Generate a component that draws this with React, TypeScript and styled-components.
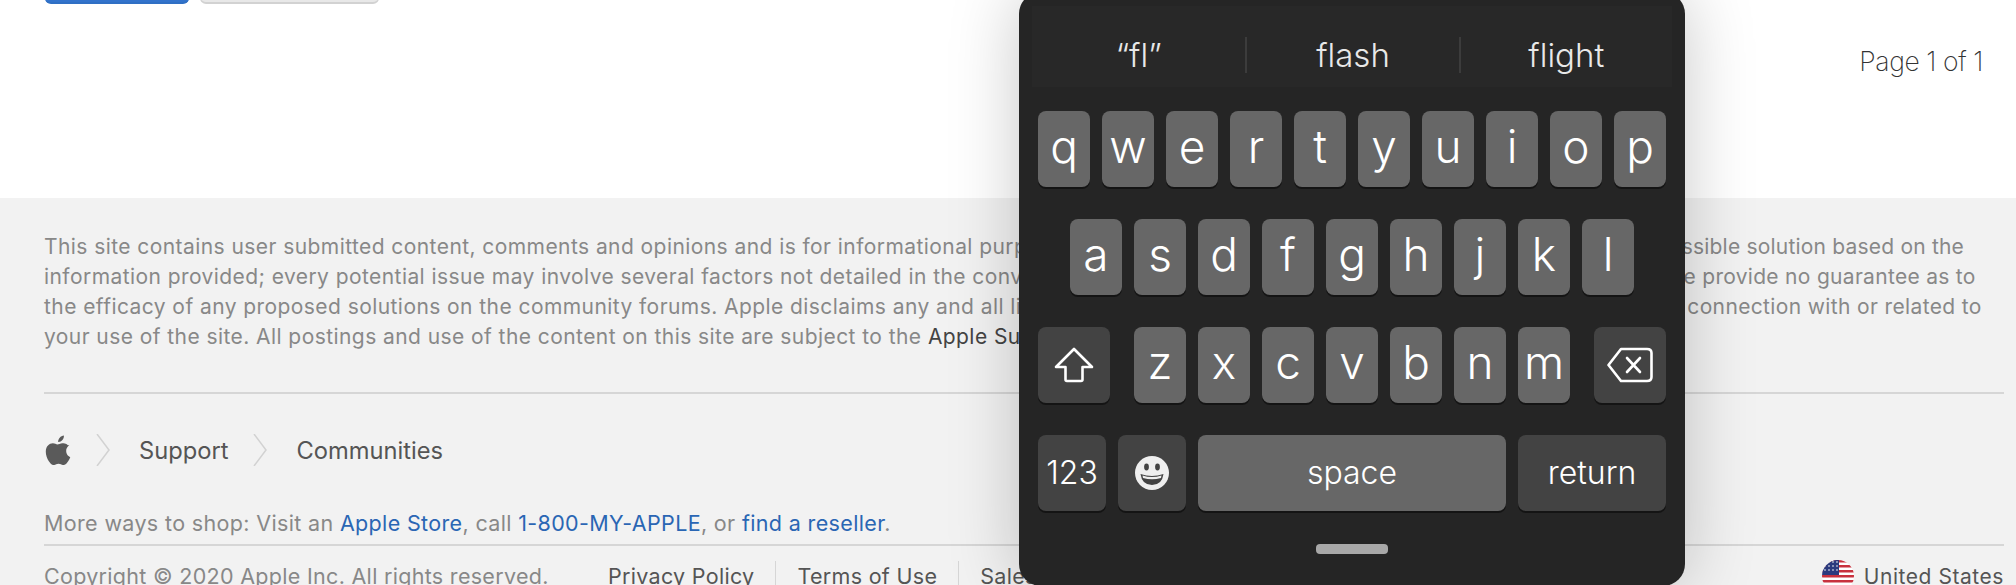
import React from 'react';
import styled, { createGlobalStyle } from 'styled-components';

/* ─── Global ──────────────────────────────────────────────────────── */
const GlobalStyle = createGlobalStyle`
  html, body { margin: 0; padding: 0; background: #fff; }
  body { font-family: Inter, "Liberation Sans", sans-serif; overflow: hidden; }
`;

const Page = styled.div`
  position: relative;
  width: 2016px;
  height: 585px;
  overflow: hidden;
  background: #fff;
`;

/* ─── Page content ────────────────────────────────────────────────── */
const Main = styled.main`
  height: 198px;
  box-sizing: border-box;
  padding: 0 33px 0 45px;
  display: flex;
  flex-direction: column;
`;

const Actions = styled.div`
  height: 4px;
  display: flex;
  align-items: flex-end;
  gap: 11px;
`;

const ActionButton = styled.button<{ $primary?: boolean; $w: number }>`
  width: ${({ $w }) => $w}px;
  height: 30px;
  flex: none;
  padding: 0;
  border-radius: 6px;
  border: ${({ $primary }) => ($primary ? 'none' : '1px solid #d2d2d2')};
  border-bottom: 2px solid ${({ $primary }) => ($primary ? '#2f6fc4' : '#d2d2d2')};
  background: ${({ $primary }) => ($primary ? '#3273cc' : '#e8e8e8')};
`;

const Pager = styled.div`
  margin-top: 41px;
  text-align: right;
  font-size: 26.5px;
  font-weight: 200;
  line-height: 32px;
  letter-spacing: -0.4px;
  color: #333;
`;

const Footer = styled.footer`
  height: 387px;
  box-sizing: border-box;
  padding: 34px 12px 0 44px;
  background: #f2f2f2;
  color: #888;
  font-size: 21px;
  overflow: hidden;
`;

const DisclaimerLine = styled.div`
  line-height: 30px;
  white-space: nowrap;
  letter-spacing: 0.43px;
`;

/* a stretch of a line tracked on its own, so the line ends where it should */
const Run = styled.span<{ $track: number }>`
  letter-spacing: ${({ $track }) => $track}px;
`;

const DarkLink = styled.span`
  color: #444;
`;

const Rule = styled.hr`
  margin: 0;
  border: none;
  height: 2px;
  background: #d6d6d6;
`;

const DisclaimerRule = styled(Rule)`
  margin-top: 40px;
`;

const Breadcrumb = styled.nav`
  height: 32px;
  margin-top: 40px;
  display: flex;
  align-items: center;
  color: #555;
  font-size: 23.7px;
`;

const Crumb = styled.span`
  margin-right: 25px;
`;

const AppleMark = styled.svg`
  width: 26px;
  height: 30px;
  margin: 0 25px 0 1px;
  fill: #5a5a5a;
`;

const Chevron = styled.svg`
  width: 14px;
  height: 32px;
  margin-right: 29px;
  fill: none;
  stroke: #d2d2d2;
  stroke-width: 1.5;
`;

const ShopLine = styled.div`
  margin-top: 42px;
  height: 30px;
  line-height: 30px;
  font-size: 21.5px;
  letter-spacing: 0.35px;
`;

const BlueLink = styled.span`
  color: #2a66b4;
`;

const ShopRule = styled(Rule)`
  margin-top: 6px;
`;

const LegalRow = styled.div`
  margin-top: 15px;
  height: 30px;
  display: flex;
  align-items: center;
  font-size: 21.5px;
  letter-spacing: 0.3px;
`;

const Copyright = styled.span`
  width: 564px;
  flex: none;
`;

const LegalLink = styled.span`
  color: #555;
  padding-right: 21px;
  margin-right: 21px;
  border-right: 1px solid #d6d6d6;
  line-height: 30px;
`;

const Locale = styled.div`
  margin-left: auto;
  display: flex;
  align-items: center;
  gap: 10px;
  color: #555;
  font-size: 21px;
  letter-spacing: 0.55px;
`;

const Flag = styled.svg`
  width: 32px;
  height: 32px;
`;

/* ─── Keyboard ────────────────────────────────────────────────────── */
const Keyboard = styled.div`
  position: absolute;
  left: 1019px;
  top: -8px;
  width: 666px;
  height: 594px;
  box-sizing: border-box;
  padding: 14px 19px 0;
  border-radius: 22px;
  background: #252525;
  box-shadow: 0 0 70px rgba(0, 0, 0, 0.22);
  display: flex;
  flex-direction: column;
  color: #fff;
`;

const Suggestions = styled.div`
  height: 81px;
  margin: 0 -6px 24px;
  flex: none;
  display: grid;
  grid-template-columns: repeat(3, 1fr);
  align-items: center;
  background: #282828;
`;

const Suggestion = styled.div<{ $divided?: boolean }>`
  height: 36px;
  margin-top: 17px;
  line-height: 36px;
  text-align: center;
  font-size: 33px;
  font-weight: 300;
  color: #e8e8e8;
  border-left: ${({ $divided }) => ($divided ? '2px solid #3c3c3c' : 'none')};
`;

const Rows = styled.div`
  display: flex;
  flex-direction: column;
  gap: 32px;
`;

const Row = styled.div<{ $spread?: boolean }>`
  display: flex;
  gap: 12px;
  justify-content: ${({ $spread }) => ($spread ? 'space-between' : 'center')};
`;

const Key = styled.div<{ $w?: number; $special?: boolean; $grow?: boolean; $label?: boolean; $icon?: boolean }>`
  width: ${({ $w }) => ($w ? `${$w}px` : '52px')};
  height: 76px;
  flex: ${({ $grow }) => ($grow ? '1' : 'none')};
  box-sizing: border-box;
  padding-bottom: ${({ $label, $icon }) => ($icon ? '0' : $label ? '2px' : '6px')};
  display: flex;
  align-items: center;
  justify-content: center;
  border-radius: 8px;
  background: ${({ $special }) => ($special ? '#434343' : '#676767')};
  box-shadow: 0 2px 0 #141414;
  font-size: ${({ $label }) => ($label ? '32px' : '46px')};
  font-weight: 300;
  color: #fff;
`;

const Handle = styled.div`
  width: 72px;
  height: 10px;
  margin: 33px auto 0;
  border-radius: 4px;
  background: #a8a8a8;
`;

const TOP_ROW = ['q', 'w', 'e', 'r', 't', 'y', 'u', 'i', 'o', 'p'];
const MID_ROW = ['a', 's', 'd', 'f', 'g', 'h', 'j', 'k', 'l'];
const LOW_ROW = ['z', 'x', 'c', 'v', 'b', 'n', 'm'];

const Letters = ({ keys }: { keys: string[] }) => (
    <>
        {keys.map((k) => <Key key={k}>{k}</Key>)}
    </>
);

const LetterGroup = styled.div`
  display: flex;
  gap: 12px;
`;

const ShiftIcon = () => (
    <svg width="40" height="36" viewBox="0 0 40 36" fill="none" stroke="#fff" strokeWidth="2.6" strokeLinejoin="round">
        <path d="M20 2 L38 20 H28.5 V32.5 Q28.5 34 27 34 H13 Q11.5 34 11.5 32.5 V20 H2 Z" />
    </svg>
);

const DeleteIcon = () => (
    <svg width="46" height="36" viewBox="0 0 46 36" fill="none" stroke="#fff" strokeWidth="2.6" strokeLinejoin="round" strokeLinecap="round">
        <path d="M14 2 H40 Q44.5 2 44.5 6 V30 Q44.5 34 40 34 H14 L1.5 18 Z" />
        <path d="M20 11 L33 25 M33 11 L20 25" />
    </svg>
);

const EmojiIcon = () => (
    <svg width="34" height="34" viewBox="0 0 34 34">
        <ellipse cx="17" cy="17" rx="17" ry="17" fill="#efefef" />
        <ellipse cx="11.5" cy="11" rx="2.4" ry="3.4" fill="#434343" />
        <ellipse cx="22.5" cy="11" rx="2.4" ry="3.4" fill="#434343" />
        <path d="M5.5 18 Q17 22 28.5 18 Q27 29 17 29 Q7 29 5.5 18 Z" fill="#434343" />
        <path d="M7.5 19.6 Q17 22.6 26.5 19.6 L26 22 Q17 24.6 8 22 Z" fill="#efefef" />
    </svg>
);

const USFlag = () => (
    <Flag viewBox="0 0 32 32">
        <defs>
            <clipPath id="flag-clip"><circle cx="16" cy="16" r="16" /></clipPath>
        </defs>
        <g clipPath="url(#flag-clip)">
            <rect width="32" height="32" fill="#fff" />
            {[0, 5, 10, 15, 20, 25, 30].map((y) => (
                <rect key={y} y={y} width="32" height="2.5" fill="#c8313e" />
            ))}
            <rect width="17" height="15" fill="#2b3a7e" />
            {[2, 6, 10].map((y) => [3, 7, 11, 15].map((x) => (
                <circle key={`${x}-${y}`} cx={x} cy={y} r="0.8" fill="#fff" />
            )))}
        </g>
    </Flag>
);

export default function App() {
    return (
        <Page>
            <GlobalStyle />
            <Main>
                <Actions>
                    <ActionButton $primary $w={144} />
                    <ActionButton $w={179} />
                </Actions>
                <Pager>Page 1 of 1</Pager>
            </Main>
            <Footer>
                <DisclaimerLine>
                    This site contains user submitted content, comments and opinions and is for informational purposes only. Apple may provide or recommend responses as a <Run $track={0.2}>possible solution based on the</Run>
                </DisclaimerLine>
                <DisclaimerLine>
                    information provided; every potential issue may involve several factors not detailed in the conversations <Run $track={0.3}>captured in an electronic forum and Apple can therefore provide no guarantee as to</Run>
                </DisclaimerLine>
                <DisclaimerLine>
                    the efficacy of any proposed solutions on the community forums. Apple disclaims any and all liability <Run $track={0.36}>for the acts, omissions and conduct of any third parties in connection with or related to</Run>
                </DisclaimerLine>
                <DisclaimerLine>
                    your use of the site. All postings and use of the content on this site are subject to the <DarkLink>Apple Support Communities Terms of Use</DarkLink>.
                </DisclaimerLine>
                <DisclaimerRule />
                <Breadcrumb>
                    <AppleMark viewBox="0 0 814 1000">
                        <path d="M788 341c-6 4-108 62-108 190 0 149 131 202 135 203-1 3-21 72-69 143-43 62-88 124-156 124s-86-40-165-40c-77 0-104 41-167 41s-106-57-156-128C44 791 0 671 0 557 0 374 119 277 236 277c62 0 114 41 153 41 37 0 95-43 166-43 27 0 123 2 183 64zM554 170c29-35 50-83 50-131 0-7-1-14-2-19-47 2-104 32-138 72-27 30-52 78-52 127 0 7 1 15 2 17 3 1 8 1 12 1 43 0 97-29 128-67z" />
                    </AppleMark>
                    <Chevron viewBox="0 0 14 32"><path d="M1 0 L13 16 L1 32" /></Chevron>
                    <Crumb>Support</Crumb>
                    <Chevron viewBox="0 0 14 32"><path d="M1 0 L13 16 L1 32" /></Chevron>
                    <Crumb>Communities</Crumb>
                </Breadcrumb>
                <ShopLine>
                    More ways to shop: Visit an <BlueLink>Apple Store</BlueLink>, call <BlueLink>1-800-MY-APPLE</BlueLink>, or <BlueLink>find a reseller</BlueLink>.
                </ShopLine>
                <ShopRule />
                <LegalRow>
                    <Copyright>Copyright © 2020 Apple Inc. All rights reserved.</Copyright>
                    <LegalLink>Privacy Policy</LegalLink>
                    <LegalLink>Terms of Use</LegalLink>
                    <LegalLink>Sales and Refunds</LegalLink>
                    <Locale><USFlag />United States</Locale>
                </LegalRow>
            </Footer>
            <Keyboard>
                <Suggestions>
                    <Suggestion>“fl”</Suggestion>
                    <Suggestion $divided>flash</Suggestion>
                    <Suggestion $divided>flight</Suggestion>
                </Suggestions>
                <Rows>
                    <Row><Letters keys={TOP_ROW} /></Row>
                    <Row><Letters keys={MID_ROW} /></Row>
                    <Row $spread>
                        <Key $w={72} $special $icon><ShiftIcon /></Key>
                        <LetterGroup><Letters keys={LOW_ROW} /></LetterGroup>
                        <Key $w={72} $special $icon><DeleteIcon /></Key>
                    </Row>
                    <Row>
                        <Key $w={68} $special $label>123</Key>
                        <Key $w={68} $special $icon><EmojiIcon /></Key>
                        <Key $grow $label>space</Key>
                        <Key $w={148} $special $label>return</Key>
                    </Row>
                </Rows>
                <Handle />
            </Keyboard>
        </Page>
    );
}
